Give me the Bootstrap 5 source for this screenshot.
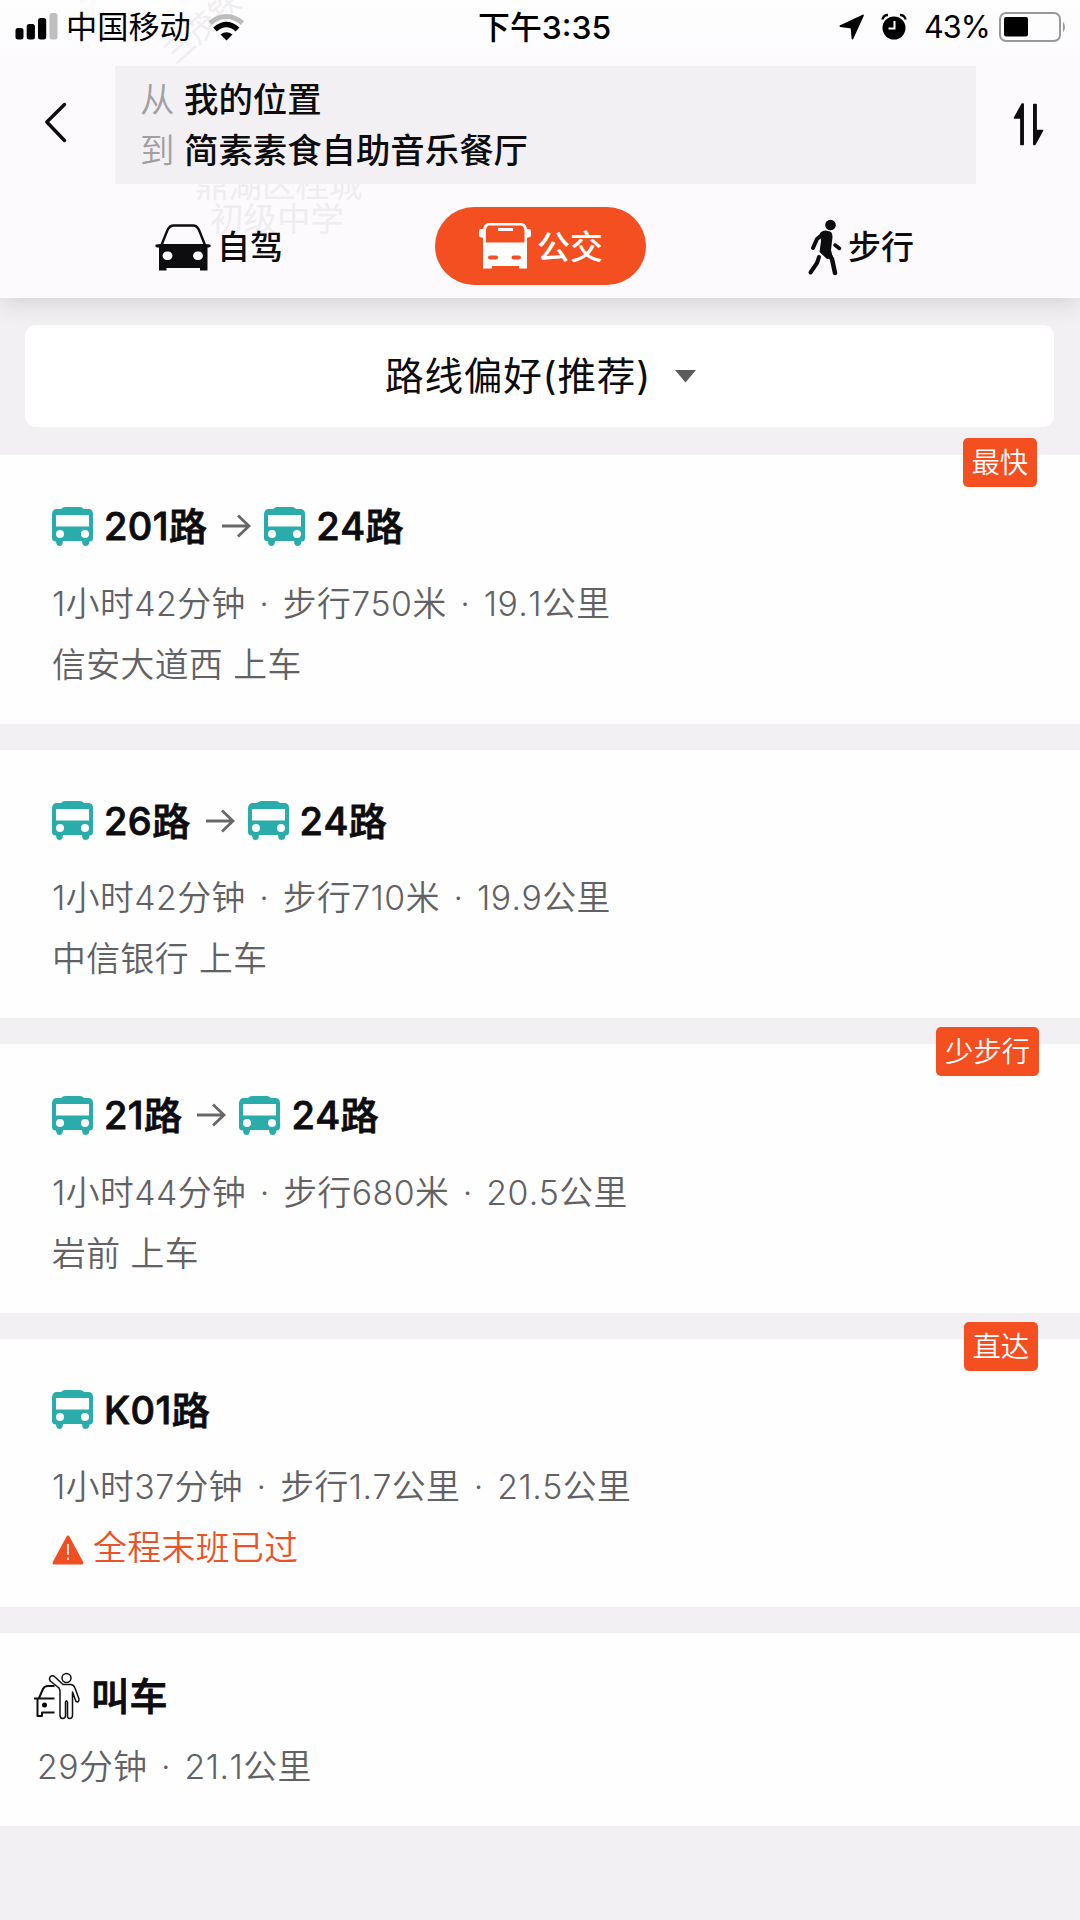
<!DOCTYPE html>
<html lang="zh-CN">
<head>
<meta charset="utf-8">
<meta name="viewport" content="width=device-width, initial-scale=1">
<title>公交路线</title>
<link href="https://cdn.jsdelivr.net/npm/bootstrap@5.3.0/dist/css/bootstrap.min.css" rel="stylesheet">
<style>
  html, body { height: 1920px; overflow: hidden; }
  body { background: #f2f0f3; color: #0d0c0f; font-family: Inter, "Noto Sans CJK SC", sans-serif; line-height: 1; }
  svg { display: block; flex: none; overflow: visible; }
  .txt { white-space: nowrap; }
  .top-panel { height: 298px; background: linear-gradient(#fefefe, #fcfafd 60px); box-shadow: 0 0 26px rgba(60,50,60,.22); z-index: 2; }
  .status { height: 54px; margin-bottom: 12px; color: #000; position: relative; }
  .status .side { height: 54px; }
  .carrier { font-size: 31.2px; padding-top: 2px; }
  .clock { font-size: 31.9px; font-weight: 500; left: 478px; top: 1px; height: 54px; }
  .pct { font-size: 30.6px; letter-spacing: -.9px; }
  .trip { height: 118px; }
  .trip-box { width: 861px; background: #f2f0f3; padding: 8px 0 0 25px; z-index: 1; }
  .trip-box .txt { font-size: 34.4px; line-height: 51px; font-weight: 500; }
  .trip-box .lbl { color: #a09fa2; font-weight: 350; width: 44px; }
  .place { color: #efedf0; font-size: 33.5px; line-height: 33px; font-weight: 400; z-index: 0; }
  .place-a { left: 195px; top: 169px; }
  .place-b { left: 210px; top: 203px; }
  .place-c { left: 157px; top: 11px; transform: rotate(-42deg); font-size: 30px; }
  .modes { margin-top: 23px; height: 78px; z-index: 1; }
  .mode { font-size: 33px; font-weight: 500; }
  .mode .txt { padding-top: 2px; }
  .mode-on { width: 211px; height: 78px; background: #f44f20; color: #fff; padding-left: 44px; }
  .pref { margin: 27px 26px 0 25px; height: 102px; background: #fff; border-radius: 11px; font-size: 38.6px; letter-spacing: .8px; padding-left: 360px; }
  .routes { margin-top: 28px; }
  .route { height: 268.6px; margin-bottom: 26px; background: #fefefe; padding: 45px 52px 0; }
  .ttl { height: 52px; font-size: 38px; font-weight: 500; font-kerning: none; letter-spacing: .4px; -webkit-text-stroke: .8px #0d0c0f; }
  .info, .stop { font-size: 33.8px; letter-spacing: .45px; font-kerning: none; font-weight: 350; color: #626164; height: 61px; line-height: 61px; }
  .info { margin-top: 20.5px; }
  .info i { font-style: normal; margin: 0 3.6px; }
  .tag { top: -17px; height: 49px; padding: 0 8.8px; background: #f44f20; color: #fff; border-radius: 5px; font-size: 28.4px; font-weight: 350; line-height: 49px; }
  .stop.warn { color: #e95327; }
  .hail { height: 193px; background: #fefefe; padding: 37px 34px 0; }
</style>
<script src="https://cdn.jsdelivr.net/npm/bootstrap@5.3.0/dist/js/bootstrap.bundle.min.js"></script>
</head>
<body>
<svg width="0" height="0" class="position-absolute">
  <defs>
    <symbol id="bus" viewBox="0 0 41 39">
      <path fill="#2aacaa" fill-rule="evenodd" d="M11 .5Q12 0 13 0H28Q29 0 30 .5L32 2H37Q41 2.500 41 7V31Q41 34.500 37.500 34.500L37 37Q36 39 33.500 39Q31 39 30.500 37L30 34H11L10.500 37Q10 39 7.500 39Q5 39 4.500 37L4 34.500Q0 34.500 0 31V7Q.500 2.500 4 2H9ZM4.500 8Q4 8 4 8.500V19Q4 19.500 4.500 19.500H36.500Q37 19.500 37 19V8.500Q37 8 36.500 8ZM8 23A4 4 0 1 0 8 31A4 4 0 1 0 8 23ZM33 23A4 4 0 1 0 33 31A4 4 0 1 0 33 23Z"/>
    </symbol>
    <symbol id="arrow" viewBox="0 0 29 24"><path d="M0 12H27M16 1.500L27 12L16 22.500" fill="none" stroke="#68676a" stroke-width="2.800"/></symbol>
  </defs>
</svg>

<header class="top-panel position-relative">
  <div class="place place-a txt position-absolute">鼎湖区桂城</div>
  <div class="place place-b txt position-absolute">初级中学</div>
  <div class="place place-c txt position-absolute">三茂铁</div>

  <div class="status d-flex justify-content-between">
    <div class="side d-flex align-items-center" style="padding-left:15px">
      <svg width="43" height="28" viewBox="0 0 43 28"><rect x=".5" y="15" width="8" height="11.500" rx="2.500"/><rect x="11.700" y="11" width="8.200" height="15.500" rx="2.500"/><rect x="23" y="5" width="8.200" height="21.500" rx="2.500"/><rect x="34.500" y="0" width="8" height="26.500" rx="2.500" fill="#bfbfc0"/></svg>
      <span class="carrier txt" style="margin-left:8px">中国移动</span>
      <svg width="37" height="27" viewBox="0 0 37 27" style="margin-left:17px"><g fill="none" stroke-width="5"><path d="M2 9Q18.500-4 34.500 9" stroke="#bdbdbe"/><path d="M7 15.500Q18.500 5.500 29.500 15.500" stroke="#000" stroke-width="5.500"/></g><path d="M18.500 26.500L12.500 20.500Q18.500 16 24.500 20.500Z"/></svg>
    </div>
    <div class="clock txt position-absolute d-flex align-items-center">下午3:35</div>
    <div class="side d-flex align-items-center" style="padding-right:13px">
      <svg width="25" height="26" viewBox="0 0 25 26"><path d="M24 1.500L13.500 24.500L12.500 13.500L1.500 12Z" stroke="#000" stroke-width="1.800" stroke-linejoin="round"/></svg>
      <svg width="26" height="26" viewBox="0 0 26 26" style="margin-left:17px"><circle cx="13" cy="14" r="11.500"/><path d="M1.500 5.500A5 5 0 0 1 7 1M24.500 5.500A5 5 0 0 0 19 1" fill="none" stroke="#000" stroke-width="2.500"/><path d="M13.500 7V14.500H7.500" fill="none" stroke="#fff" stroke-width="2"/></svg>
      <span class="pct txt" style="margin-left:17px">43%</span>
      <svg width="68" height="30" viewBox="0 0 68 30" style="margin-left:9px"><rect x="1" y="1" width="60" height="28" rx="6" fill="none" stroke="#99999b" stroke-width="2"/><rect x="5" y="5" width="24" height="19.500" rx="2"/><path d="M64 9.500Q68 15 64 20.500Z" fill="#99999b"/></svg>
    </div>
  </div>

  <div class="trip d-flex align-items-center">
    <svg width="115" height="118" viewBox="0 0 115 118"><path d="M64.500 38.500L46.800 56L64.500 74.500" fill="none" stroke="#0d0c0f" stroke-width="3.400" stroke-linecap="round" stroke-linejoin="round"/></svg>
    <div class="trip-box h-100 position-relative">
      <div class="txt d-flex"><span class="lbl">从</span><span>我的位置</span></div>
      <div class="txt d-flex"><span class="lbl">到</span><span>简素素食自助音乐餐厅</span></div>
    </div>
    <svg width="104" height="118" viewBox="0 0 104 118"><g fill="#0d0c0f" stroke="#0d0c0f" stroke-width="1.300" stroke-linejoin="round"><path d="M47.300 38V78.500H44.800V52H38.300L46 38Z"/><path d="M57.700 38.500H60.200V64.500H66.700L59 78.500H57.700Z"/></g></svg>
  </div>

  <nav class="modes position-relative d-flex align-items-center">
    <a class="mode d-flex align-items-center text-reset text-decoration-none" style="width:435px;padding-left:155px">
      <svg width="56" height="48" viewBox="0 0 56 48" style="margin-top:4px"><path d="M6.500 21L12.500 6Q14.500 1.500 19 1.500H38Q42 1.500 44 6L50 21" fill="none" stroke="#0d0c0f" stroke-width="2.400"/><path fill="#0d0c0f" fill-rule="evenodd" d="M6 20H50L55 20.500Q57 22.500 54 23.500H52.500V46.500H45V44H11.500V46.500H4V23.500H2Q-1 22.500 1 20.500ZM12.500 27.500A4.300 4.300 0 1 0 12.500 36A4.300 4.300 0 1 0 12.500 27.500ZM43 27.500A4.300 4.300 0 1 0 43 36A4.300 4.300 0 1 0 43 27.500Z"/></svg>
      <span class="txt" style="margin-left:6px">自驾</span>
    </a>
    <a class="mode mode-on rounded-pill d-flex align-items-center text-decoration-none">
      <svg width="52" height="46" viewBox="0 0 52 46"><path fill="#fff" fill-rule="evenodd" d="M10 0H42Q47 0 48 6H50Q52 6 52 8V12Q52 14.500 49 14.500L48 15V45.500H40V43H13V45.500H4V15L3 14.500Q0 14.500 0 12V8Q0 6 2 6H4Q5 0 10 0ZM10 2.500Q7 3 7 8V19.500H45.500V8Q45 3 42 2.500ZM11 32.500A2 2 0 0 0 11 36.500H17A2 2 0 0 0 17 32.500ZM34.500 32.500A2 2 0 0 0 34.500 36.500H40A2 2 0 0 0 40 32.500Z"/><path d="M19 6.500H34" stroke="#fff" stroke-width="3"/></svg>
      <span class="txt" style="margin-left:6px">公交</span>
    </a>
    <a class="mode d-flex align-items-center text-reset text-decoration-none" style="padding-left:162px">
      <svg width="34" height="58" viewBox="0 0 34 58" style="margin-top:4px"><g fill="none" stroke="#0d0c0f" stroke-linecap="round" stroke-linejoin="round"><path d="M11 38L9 44L2.500 53.500" stroke-width="4"/><path d="M18 31L24 40L27 54" stroke-width="4.500"/><path d="M15 15L9 20L5 29" stroke-width="4"/><path d="M27 26L31.500 29.500" stroke-width="3.500"/></g><circle cx="22.500" cy="6" r="5.300" fill="#0d0c0f"/><path fill="#0d0c0f" d="M12 14Q16 10.500 20 12Q24.500 12 24.500 18L23 31L25 39L19 40L11.500 33L13 22Z"/></svg>
      <span class="txt" style="margin-left:6px">步行</span>
    </a>
  </nav>
</header>

<main>
  <div class="pref d-flex align-items-center">
    <span class="txt">路线偏好(推荐)</span>
    <svg width="21" height="13" viewBox="0 0 21 13" style="margin-left:24px"><path d="M0 0H21L10.500 12.500Z" fill="#5b5a5d"/></svg>
  </div>

  <div class="routes">
    <section class="route position-relative">
      <span class="tag txt position-absolute" style="right:43px">最快</span>
      <div class="ttl d-flex align-items-center"><svg width="41" height="39"><use href="#bus"/></svg><span class="txt" style="margin:0 15px 0 11px">201路</span><svg width="29" height="24"><use href="#arrow"/></svg><svg width="41" height="39" style="margin-left:13px"><use href="#bus"/></svg><span class="txt" style="margin-left:11px">24路</span></div>
      <div class="info txt">1小时42分钟 <i>·</i> 步行750米 <i>·</i> 19.1公里</div>
      <div class="stop txt">信安大道西 上车</div>
    </section>
    <section class="route position-relative">
      <div class="ttl d-flex align-items-center"><svg width="41" height="39"><use href="#bus"/></svg><span class="txt" style="margin:0 15px 0 11px">26路</span><svg width="29" height="24"><use href="#arrow"/></svg><svg width="41" height="39" style="margin-left:13px"><use href="#bus"/></svg><span class="txt" style="margin-left:11px">24路</span></div>
      <div class="info txt">1小时42分钟 <i>·</i> 步行710米 <i>·</i> 19.9公里</div>
      <div class="stop txt">中信银行 上车</div>
    </section>
    <section class="route position-relative">
      <span class="tag txt position-absolute" style="right:41px">少步行</span>
      <div class="ttl d-flex align-items-center"><svg width="41" height="39"><use href="#bus"/></svg><span class="txt" style="margin:0 15px 0 11px">21路</span><svg width="29" height="24"><use href="#arrow"/></svg><svg width="41" height="39" style="margin-left:13px"><use href="#bus"/></svg><span class="txt" style="margin-left:11px">24路</span></div>
      <div class="info txt">1小时44分钟 <i>·</i> 步行680米 <i>·</i> 20.5公里</div>
      <div class="stop txt">岩前 上车</div>
    </section>
    <section class="route position-relative">
      <span class="tag txt position-absolute" style="right:42px">直达</span>
      <div class="ttl d-flex align-items-center"><svg width="41" height="39"><use href="#bus"/></svg><span class="txt" style="margin-left:11px">K01路</span></div>
      <div class="info txt">1小时37分钟 <i>·</i> 步行1.7公里 <i>·</i> 21.5公里</div>
      <div class="stop warn d-flex align-items-center"><svg width="32" height="30" viewBox="0 0 32 30" style="margin-top:4px"><path d="M16 2L30 28H2Z" fill="#f04e23" stroke="#f04e23" stroke-width="3" stroke-linejoin="round"/><path d="M16 9V20M16 22.500V25" stroke="#fff" stroke-width="1.600"/></svg><span class="txt" style="margin-left:9px">全程末班已过</span></div>
    </section>
    <section class="hail">
      <div class="ttl d-flex align-items-center"><svg width="46" height="48" viewBox="0 0 46 48"><g fill="none" stroke="#111" stroke-width="1.500" stroke-linejoin="round"><circle cx="32.500" cy="6" r="4.500"/><path d="M25 16L17.500 10Q14.500 8 16 5Q18.500 2.500 21 5L29 12.500H37Q40 13 41 16L45 27Q45 31 42 29.500L38.500 20V43Q38.500 46.500 35.500 46.500Q33.500 46.500 33.500 43.500V30Q32.500 28 31.500 30V43.500Q31.500 46.500 28.500 46.500Q26 46.500 26 43V20Q26 17.500 25 16Z"/><path d="M20.500 14H14Q10.500 14 9 17L5 26M0 26.500H20.500M3.500 26V44H8V40.500H20.500" stroke-width="2"/></g><circle cx="10.500" cy="33" r="2.500"/></svg><span class="txt" style="margin-left:11px">叫车</span></div>
      <div class="info txt" style="margin:14px 0 0 3px">29分钟 <i>·</i> 21.1公里</div>
    </section>
  </div>
</main>
</body>
</html>
